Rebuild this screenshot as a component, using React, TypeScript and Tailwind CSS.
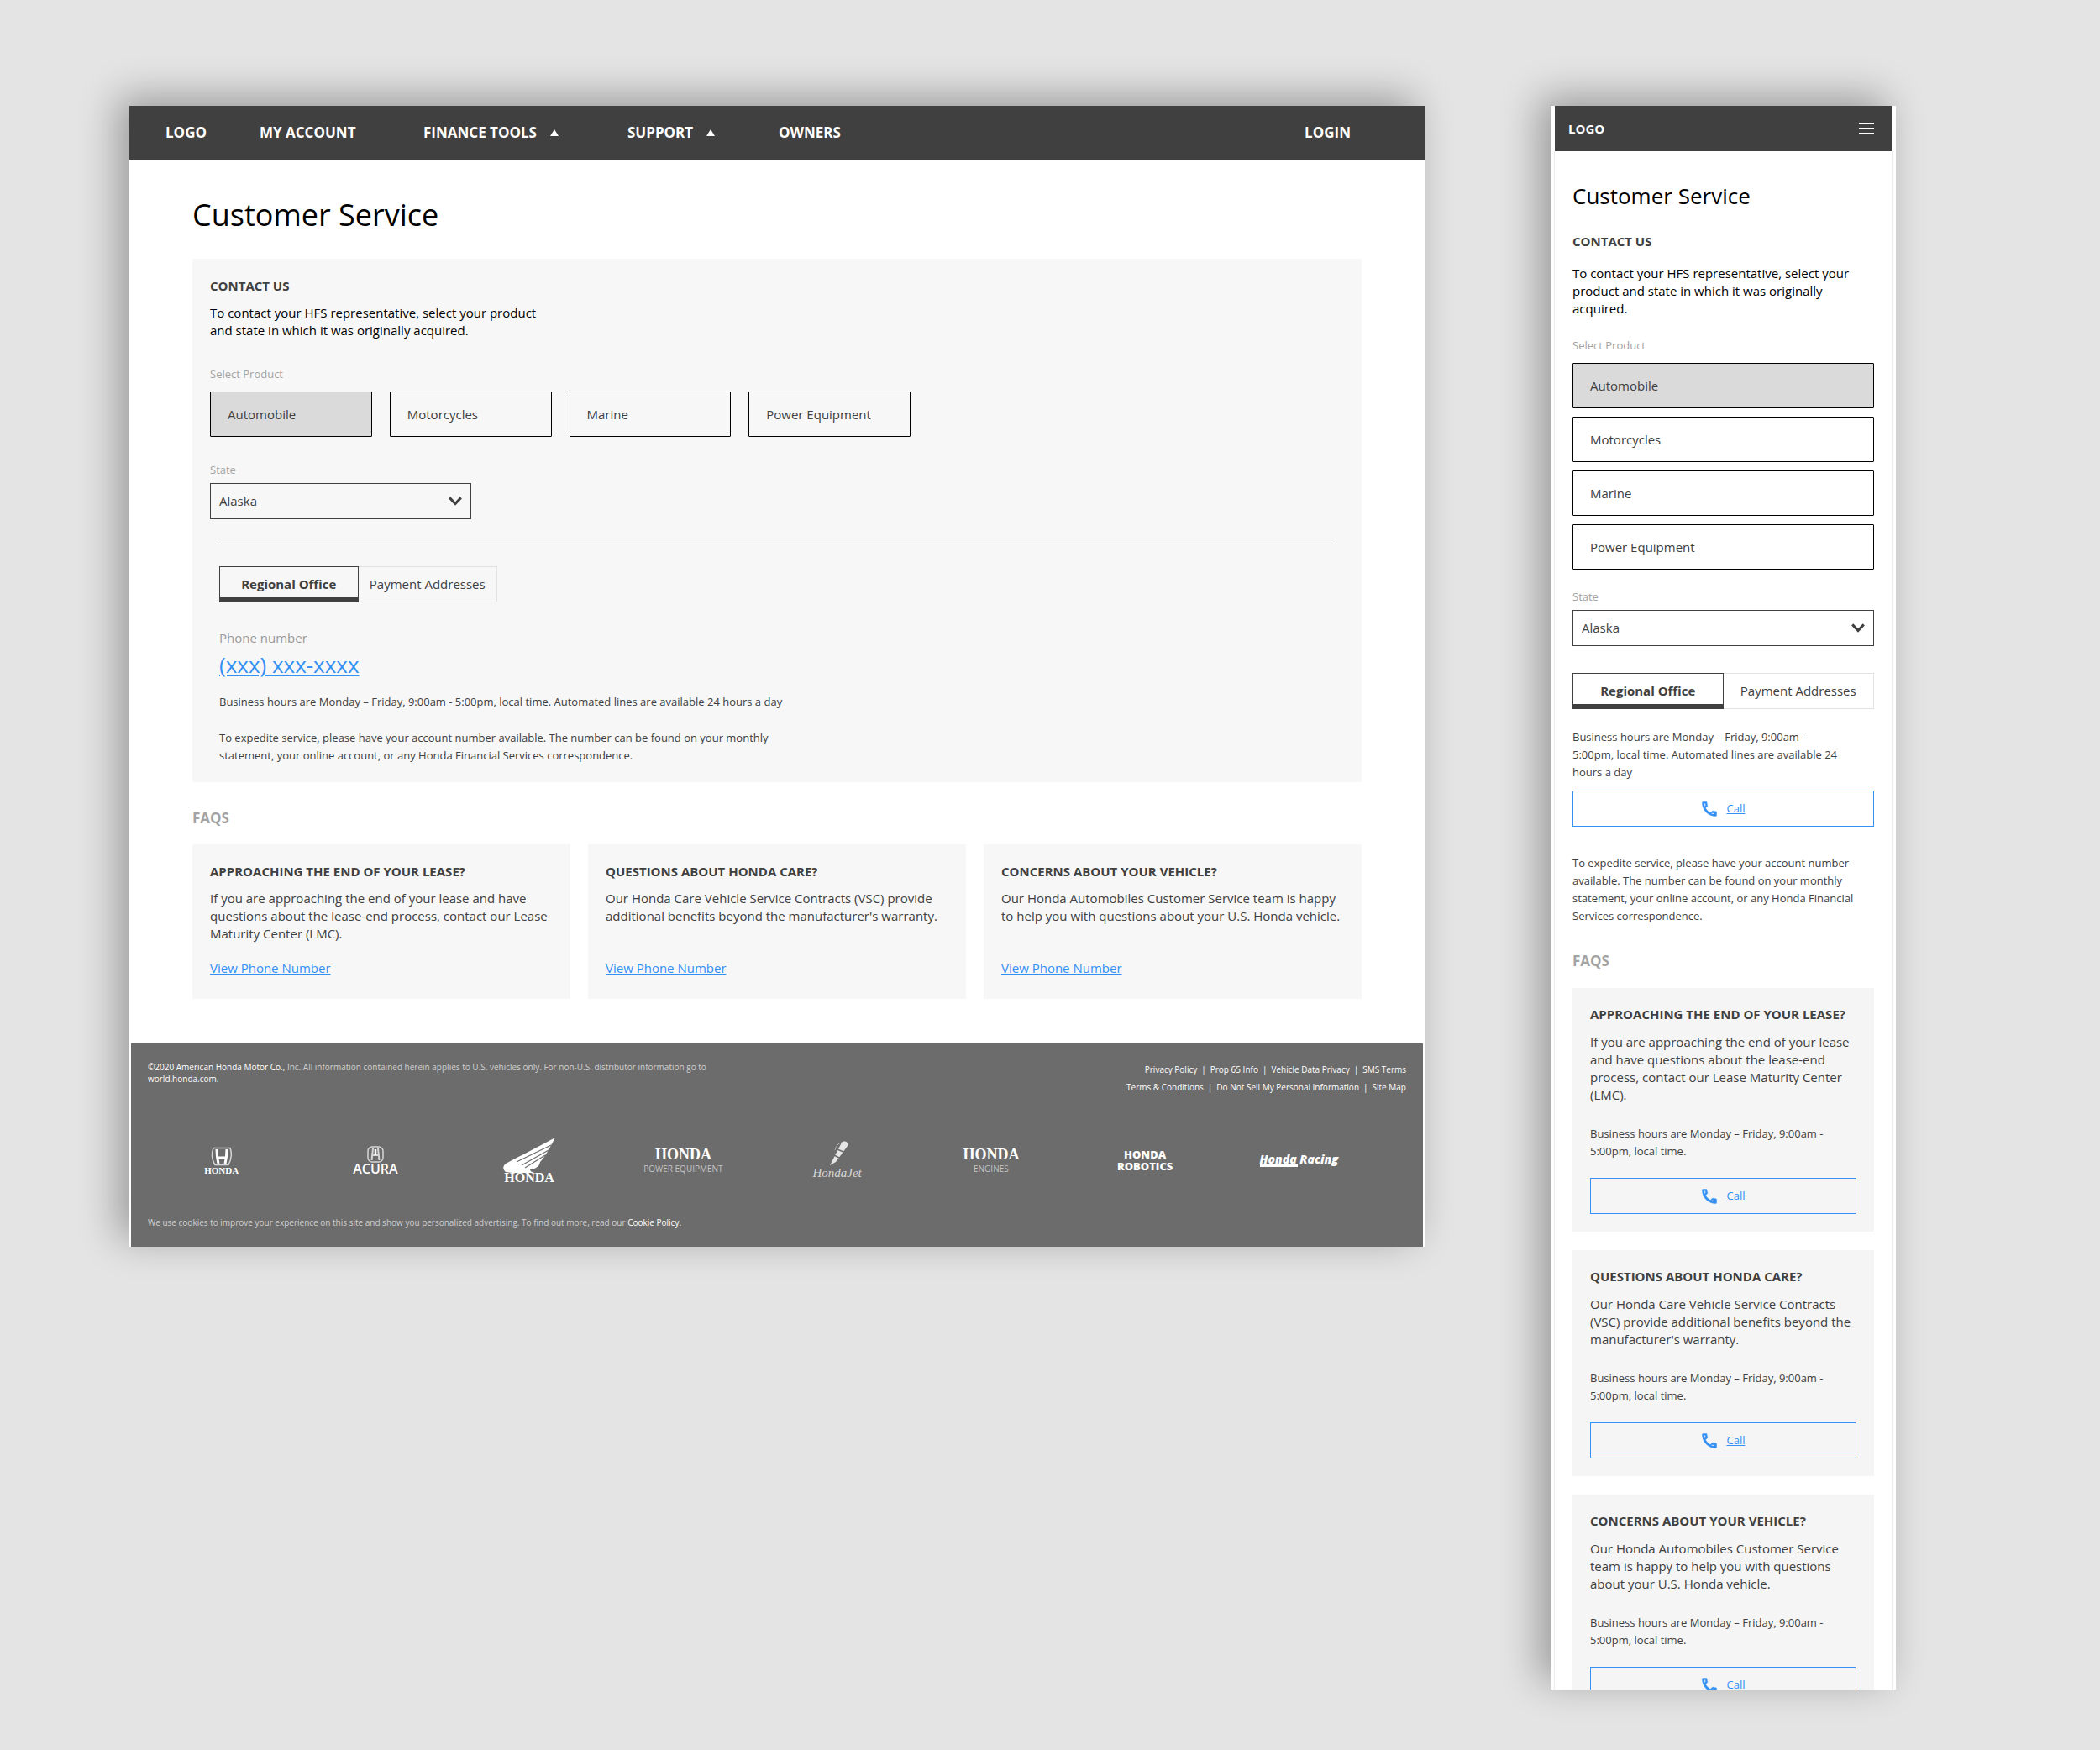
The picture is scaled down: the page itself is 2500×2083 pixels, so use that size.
import { useState } from "react";

interface Faq {
  title: string;
  body: string;
}

const PRODUCTS = ["Automobile", "Motorcycles", "Marine", "Power Equipment"];

const STATES = ["Alabama", "Alaska", "Arizona", "Arkansas", "California"];

const TABS = ["Regional Office", "Payment Addresses"];

const FAQS: Faq[] = [
  {
    title: "APPROACHING THE END OF YOUR LEASE?",
    body: "If you are approaching the end of your lease and have questions about the lease-end process, contact our Lease Maturity Center (LMC).",
  },
  {
    title: "QUESTIONS ABOUT HONDA CARE?",
    body: "Our Honda Care Vehicle Service Contracts (VSC) provide additional benefits beyond the manufacturer's warranty.",
  },
  {
    title: "CONCERNS ABOUT YOUR VEHICLE?",
    body: "Our Honda Automobiles Customer Service team is happy to help you with questions about your U.S. Honda vehicle.",
  },
];

const FOOTER_LINKS = [
  ["Privacy Policy", "Prop 65 Info", "Vehicle Data Privacy", "SMS Terms"],
  ["Terms & Conditions", "Do Not Sell My Personal Information", "Site Map"],
];

/*
  SHARED CONTROLS
*/

function ProductButton({
  name,
  active,
  onClick,
}: {
  name: string;
  active: boolean;
  onClick: () => void;
}) {
  return (
    <button
      type="button"
      aria-pressed={active}
      onClick={onClick}
      className={`h-[54px] w-full rounded-[1px] border border-black px-5 text-left text-[15px] leading-[21px] ${
        active ? "bg-[#dadada]" : "bg-transparent"
      }`}
    >
      {name}
    </button>
  );
}

function StateSelect({ id }: { id: string }) {
  const [state, setState] = useState("Alaska");

  return (
    <div>
      <label htmlFor={id} className="block text-[13px] leading-[21px] text-[#a3a3a3]">
        State
      </label>
      <div className="relative mt-[5px]">
        <select
          id={id}
          value={state}
          onChange={(e) => setState(e.target.value)}
          className="h-[43px] w-full appearance-none border border-[#404040] bg-transparent px-2.5 text-[15px] leading-[21px]"
        >
          {STATES.map((s) => (
            <option key={s}>{s}</option>
          ))}
        </select>
        <svg
          viewBox="0 0 16 11"
          className="pointer-events-none absolute top-4 right-[11px] h-[11px] w-4"
          fill="none"
          stroke="#404040"
          strokeWidth="3"
        >
          <path d="M1.2 1.4 8 8.6l6.8-7.2" />
        </svg>
      </div>
    </div>
  );
}

function OfficeTabs() {
  const [tab, setTab] = useState(TABS[0]);

  return (
    <div role="tablist" className="grid h-[43px] grid-cols-2 text-[15px] leading-[21px]">
      {TABS.map((name) => (
        <button
          key={name}
          type="button"
          role="tab"
          aria-selected={tab === name}
          onClick={() => setTab(name)}
          className={
            tab === name
              ? "border border-b-[6px] border-[#404040] pt-1 font-bold"
              : "border border-l-0 border-[#e2e2e2]"
          }
        >
          {name}
        </button>
      ))}
    </div>
  );
}

function CallButton() {
  return (
    <a
      href="tel:"
      className="flex h-[43px] items-center justify-center gap-3 border border-[#3390f5] text-[13px] leading-[21px] text-[#3390f5]"
    >
      <svg
        viewBox="-0.5 -0.5 19 19"
        className="h-[18px] w-[18px]"
        fill="currentColor"
        stroke="currentColor"
        strokeWidth="0.5"
      >
        <path
          fillRule="evenodd"
          d="M3.9 2c.06.9.21 1.76.45 2.6l-1.2 1.2A14.6 14.6 0 0 1 2.39 2H3.9m8.5 11.66c.84.24 1.7.39 2.6.45v1.49a14.9 14.9 0 0 1-3.8-.74l1.2-1.2M5 0H1a1 1 0 0 0-1 1c0 9.4 7.6 17 17 17a1 1 0 0 0 1-1v-4a1 1 0 0 0-1-1c-1.25 0-2.45-.2-3.57-.57a1 1 0 0 0-1.02.24l-2.2 2.2A15.15 15.15 0 0 1 4.13 7.8l2.2-2.2a1 1 0 0 0 .25-1.02A11.36 11.36 0 0 1 6 1a1 1 0 0 0-1-1z"
        />
      </svg>
      <span className="underline">Call</span>
    </a>
  );
}

/*
  FOOTER LOGOS
*/

function BrandLogos() {
  return (
    <ul className="grid grid-cols-8 items-center text-center font-['Liberation_Serif',serif] text-white">
      <li className="flex flex-col items-center">
        <svg viewBox="0 0 28 23" className="h-[23px] w-7" fill="none" stroke="#d6d6d6">
          <path d="M4 1.5h20c2 5 2 13-2 20H6C2 15 2 7 4 1.5z" strokeWidth="1.5" />
          <path d="M8 3c0 6 .5 11 2 17M20 3c0 6-.5 11-2 17M10 13h8" stroke="#fff" strokeWidth="3" />
        </svg>
        <span className="text-[11px] leading-[10px] font-bold">HONDA</span>
      </li>
      <li className="flex flex-col items-center">
        <svg viewBox="0 0 20 21" className="h-[21px] w-5" fill="none" stroke="#d6d6d6">
          <rect x="1" y="1" width="18" height="18" rx="5" strokeWidth="1.5" />
          <path d="M7 3 5.5 17M13 3l1.5 14M7 11h6" strokeWidth="2" />
          <path d="M10 4v7" stroke="#fff" strokeWidth="2.5" />
        </svg>
        <span className="font-['Open_Sans',sans-serif] text-base leading-[13px] font-semibold">
          ACURA
        </span>
      </li>
      <li className="flex flex-col items-center">
        <svg viewBox="0 0 62 42" className="h-[42px] w-[62px]" fill="#fff">
          <path d="M62 0C44 10 20 22 5 30c-6 3-6 8-2 11l8 1h26c-3-1-5-2-5-4 8-1 11-4 12-9 6-6 12-18 18-29z" />
          <path
            d="M57 9 16 29M54 15 22 33M50 21 26 36"
            stroke="#6c6c6c"
            strokeWidth="1.2"
          />
        </svg>
        <span className="text-base leading-3 font-bold">HONDA</span>
      </li>
      <li className="flex flex-col items-center gap-1">
        <span className="text-lg leading-4 font-bold">HONDA</span>
        <span className="font-['Open_Sans',sans-serif] text-[10px] leading-[10px] text-[#c4c4c4]">
          POWER EQUIPMENT
        </span>
      </li>
      <li className="flex flex-col items-center">
        <svg viewBox="0 0 30 30" className="h-[30px] w-[30px]">
          <path d="M6 29 20 2c3-3 9-1 7 4L13 25z" fill="#e6e6e6" />
          <path d="m15 10 9 4M11 17l8 4" stroke="#6c6c6c" strokeWidth="1.5" />
          <path d="M12 11c1-5 4-8 8-9" stroke="#b5b5b5" fill="none" />
        </svg>
        <span className="text-[15px] leading-4 text-[#d6d6d6] italic">HondaJet</span>
      </li>
      <li className="flex flex-col items-center gap-1">
        <span className="text-lg leading-4 font-bold">HONDA</span>
        <span className="font-['Open_Sans',sans-serif] text-[10px] leading-[10px] text-[#c4c4c4]">
          ENGINES
        </span>
      </li>
      <li className="flex flex-col items-center font-['Open_Sans',sans-serif] text-[13px] leading-[14px] font-extrabold">
        <span>HONDA</span>
        <span>ROBOTICS</span>
      </li>
      <li className="flex justify-center font-['Open_Sans',sans-serif]">
        <span className="flex flex-col">
          <span className="text-sm leading-3 font-extrabold italic">Honda Racing</span>
          <span className="h-[3px] w-[45px] bg-white" />
        </span>
      </li>
    </ul>
  );
}

/*
  DESKTOP PAGE
*/

function DesktopPage() {
  const [product, setProduct] = useState(PRODUCTS[0]);

  return (
    <div className="min-w-0 flex-1 bg-white shadow-[-13px_-10px_44px_rgba(0,0,0,0.33)]">
      {/* NAVBAR */}

      <nav className="flex h-16 items-center bg-[#404040] pr-[88px] pl-[43px] text-[17px] font-bold text-white">
        <a href="#" className="w-28">LOGO</a>
        <a href="#" className="w-[195px]">MY ACCOUNT</a>
        <a href="#" className="flex w-[243px] items-center gap-4">
          FINANCE TOOLS
          <svg viewBox="0 0 10 8" className="h-2 w-2.5" fill="#fff">
            <path d="M5 0l5 8H0z" />
          </svg>
        </a>
        <a href="#" className="flex w-[180px] items-center gap-4">
          SUPPORT
          <svg viewBox="0 0 10 8" className="h-2 w-2.5" fill="#fff">
            <path d="M5 0l5 8H0z" />
          </svg>
        </a>
        <a href="#">OWNERS</a>
        <a href="#" className="ml-auto">LOGIN</a>
      </nav>

      <main className="px-[75px] pt-[42px] pb-[53px]">
        <h1 className="text-4xl leading-[48px] text-black">Customer Service</h1>

        {/* CONTACT */}

        <section className="mt-7 bg-[#f7f7f7] px-[21px] pt-[22px] pb-[21px]">
          <h2 className="text-[15px] leading-[21px] font-bold">CONTACT US</h2>
          <p className="mt-[11px] max-w-[400px] text-[15px] leading-[21px] text-black">
            To contact your HFS representative, select your product and state in which it was
            originally acquired.
          </p>

          <p className="mt-[31px] text-[13px] leading-[21px] text-[#a3a3a3]">Select Product</p>
          <div className="mt-2.5 grid max-w-[834px] grid-cols-4 gap-[21px]">
            {PRODUCTS.map((name) => (
              <ProductButton
                key={name}
                name={name}
                active={product === name}
                onClick={() => setProduct(name)}
              />
            ))}
          </div>

          <div className="mt-[29px] max-w-[311px]">
            <StateSelect id="state-desktop" />
          </div>

          <div className="mx-[11px] mt-[23px] border-t border-[#9b9b9b] pt-8">
            <div className="max-w-[331px]">
              <OfficeTabs />
            </div>
            <p className="mt-8 text-[15px] leading-[21px] text-[#999999]">Phone number</p>
            <a
              href="tel:"
              className="mt-[5px] block w-fit text-[26px] leading-8 text-[#3390f5] underline"
            >
              (xxx) xxx-xxxx
            </a>
            <p className="mt-[18px] text-[13px] leading-[21px]">
              Business hours are Monday – Friday, 9:00am - 5:00pm, local time. Automated lines
              are available 24 hours a day
            </p>
            <p className="mt-[22px] max-w-[660px] text-[13px] leading-[21px]">
              To expedite service, please have your account number available. The number can be
              found on your monthly statement, your online account, or any Honda Financial
              Services correspondence.
            </p>
          </div>
        </section>

        {/* FAQS */}

        <h2 className="mt-[31px] text-[17px] leading-6 font-bold text-[#a3a3a3]">FAQS</h2>
        <div className="mt-[19px] grid grid-cols-3 gap-[21px]">
          {FAQS.map((faq) => (
            <article
              key={faq.title}
              className="flex flex-col bg-[#f7f7f7] px-[21px] pt-[22px] pb-[26px] text-[15px] leading-[21px]"
            >
              <h3 className="font-bold">{faq.title}</h3>
              <p className="mt-[11px] mb-5">{faq.body}</p>
              <a href="#" className="mt-auto w-fit text-[#3390f5] underline">
                View Phone Number
              </a>
            </article>
          ))}
        </div>
      </main>

      {/* FOOTER */}

      <footer className="mx-0.5 bg-[#6c6c6c] px-5 pt-[21px] pb-[22px] text-[10px] leading-[14px] text-[#cfcfcf]">
        <div className="flex items-start justify-between">
          <p className="max-w-[680px]">
            <a href="#" className="text-white">©2020 American Honda Motor Co.,</a> Inc. All
            information contained herein applies to U.S. vehicles only. For non-U.S. distributor
            information go to <a href="#" className="text-white">world.honda.com.</a>
          </p>
          <div className="text-white">
            {FOOTER_LINKS.map((row) => (
              <ul key={row[0]} className="flex justify-end leading-[21px]">
                {row.map((name, i) => (
                  <li key={name}>
                    {i > 0 && <span className="mx-[5px]">|</span>}
                    <a href="#">{name}</a>
                  </li>
                ))}
              </ul>
            ))}
          </div>
        </div>
        <div className="mt-[49px] mr-9 mb-10 -ml-1">
          <BrandLogos />
        </div>
        <p>
          We use cookies to improve your experience on this site and show you personalized
          advertising. To find out more, read our{" "}
          <a href="#" className="text-white">Cookie Policy.</a>
        </p>
      </footer>
    </div>
  );
}

/*
  MOBILE PAGE
*/

function MobilePage() {
  const [product, setProduct] = useState(PRODUCTS[0]);

  return (
    <div className="max-h-[1885px] w-[411px] shrink-0 overflow-hidden bg-white px-1 shadow-[-13px_-10px_44px_rgba(0,0,0,0.33)]">
      <nav className="mx-px flex h-[54px] items-center justify-between bg-[#404040] pr-[21px] pl-4 text-[15px] font-bold text-white">
        <a href="#">LOGO</a>
        <button type="button" aria-label="Menu" className="flex w-[18px] flex-col gap-1">
          <span className="h-0.5 bg-white" />
          <span className="h-0.5 bg-white" />
          <span className="h-0.5 bg-white" />
        </button>
      </nav>

      <main className="border-x border-[#ececec] px-[21px] pt-[37px]">
        <h1 className="text-[26px] leading-8 text-black">Customer Service</h1>
        <h2 className="mt-7 text-[15px] leading-[21px] font-bold">CONTACT US</h2>
        <p className="mt-[17px] text-[15px] leading-[21px] text-black">
          To contact your HFS representative, select your product and state in which it was
          originally acquired.
        </p>

        <p className="mt-[23px] text-[13px] leading-[21px] text-[#a3a3a3]">Select Product</p>
        <div className="mt-2.5 grid gap-2.5">
          {PRODUCTS.map((name) => (
            <ProductButton
              key={name}
              name={name}
              active={product === name}
              onClick={() => setProduct(name)}
            />
          ))}
        </div>

        <div className="mt-[22px]">
          <StateSelect id="state-mobile" />
        </div>

        <div className="mt-8">
          <OfficeTabs />
        </div>

        <p className="mt-[23px] mb-[11px] pr-8 text-[13px] leading-[21px]">
          Business hours are Monday – Friday, 9:00am - 5:00pm, local time. Automated lines are
          available 24 hours a day
        </p>
        <CallButton />
        <p className="mt-[33px] text-[13px] leading-[21px]">
          To expedite service, please have your account number available. The number can be
          found on your monthly statement, your online account, or any Honda Financial Services
          correspondence.
        </p>

        {/* FAQS */}

        <h2 className="mt-[31px] text-[17px] leading-6 font-bold text-[#a3a3a3]">FAQS</h2>
        <div className="mt-5 grid gap-[22px]">
          {FAQS.map((faq) => (
            <article key={faq.title} className="bg-[#f5f5f5] p-[21px] text-[15px] leading-[21px]">
              <h3 className="font-bold">{faq.title}</h3>
              <p className="mt-3">{faq.body}</p>
              <p className="mt-[25px] mb-[21px] text-[13px]">
                Business hours are Monday – Friday, 9:00am - 5:00pm, local time.
              </p>
              <CallButton />
            </article>
          ))}
        </div>
      </main>
    </div>
  );
}

export default function App() {
  return (
    <div className="flex min-h-screen items-start gap-[150px] bg-[#e4e4e4] pt-[126px] pr-[243px] pb-[72px] pl-[154px] font-['Open_Sans',sans-serif] text-[#404040]">
      <DesktopPage />
      <MobilePage />
    </div>
  );
}
